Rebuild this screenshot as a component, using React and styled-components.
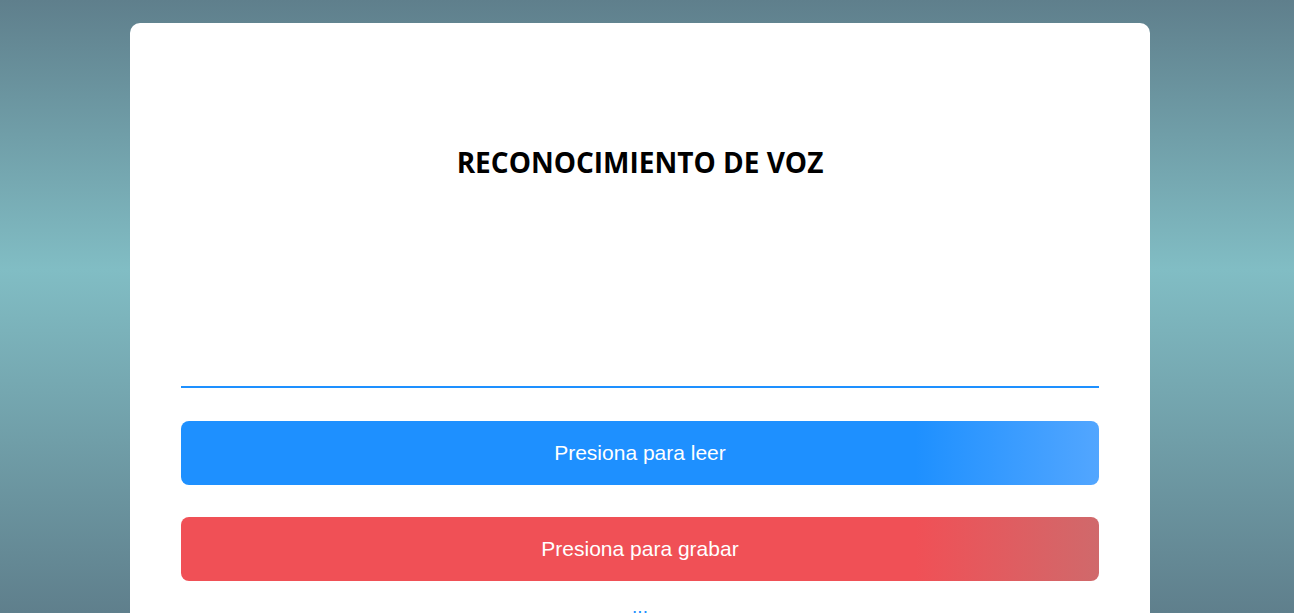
import React from "react";
import styled, { createGlobalStyle } from "styled-components";

const Global = createGlobalStyle`
  html, body { margin: 0; padding: 0; }
  body {
    min-height: 613px;
    background: linear-gradient(to bottom, #5f7f8c 0%, #81bdc4 44%, #5f7f8c 100%);
    background-attachment: fixed;
    font-family: "Liberation Sans", Arial, sans-serif;
    overflow: hidden;
  }
`;

const Page = styled.div`
  display: flex;
  justify-content: center;
  padding: 23px 14px 0 0;
`;

const Card = styled.main`
  width: 1020px;
  box-sizing: border-box;
  background: #fff;
  border-radius: 10px;
  padding: 0 51px 20px;
  display: flex;
  flex-direction: column;
`;

const Title = styled.h1`
  margin: 121px 0 0;
  text-align: center;
  font-family: "Open Sans", "Noto Sans", sans-serif;
  font-weight: 700;
  font-size: 28px;
  line-height: 36px;
  color: #000;
`;

const Transcript = styled.div`
  height: 206px;
  border-bottom: 2px solid #1e90ff;
`;

const Actions = styled.div`
  display: flex;
  flex-direction: column;
  gap: 32px;
  margin-top: 33px;
`;

const ActionButton = styled.button`
  height: 64px;
  border: none;
  border-radius: 8px;
  color: #fff;
  font-family: "Liberation Sans", Arial, sans-serif;
  font-size: 21px;
  cursor: pointer;
  background: ${(p) =>
    p.$variant === "record"
      ? "linear-gradient(90deg, #f05056 80%, #d0696b 100%)"
      : "linear-gradient(90deg, #1e90ff 80%, #52a6ff 100%)"};
`;

const Status = styled.div`
  margin-top: 15px;
  text-align: center;
  color: #1e90ff;
  font-size: 19px;
  line-height: 22px;
`;

export default function App() {
  return (
    <>
      <Global />
      <Page>
        <Card>
          <Title>RECONOCIMIENTO DE VOZ</Title>
          <Transcript />
          <Actions>
            <ActionButton>Presiona para leer</ActionButton>
            <ActionButton $variant="record">Presiona para grabar</ActionButton>
          </Actions>
          <Status>...</Status>
        </Card>
      </Page>
    </>
  );
}
